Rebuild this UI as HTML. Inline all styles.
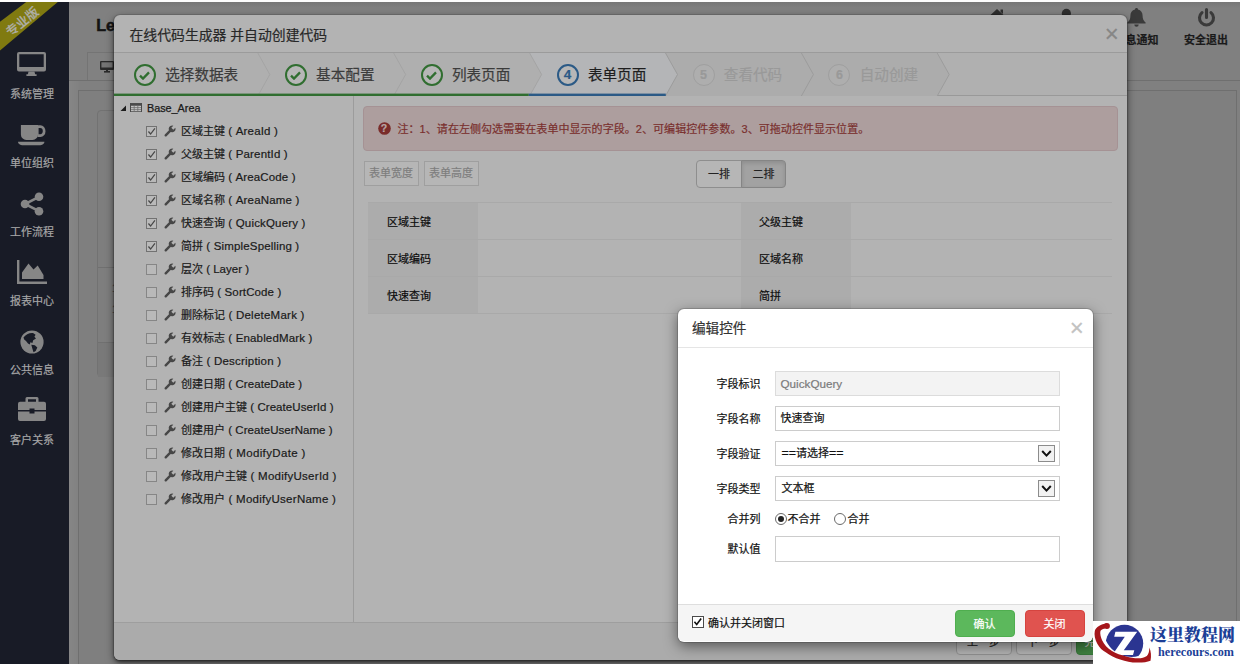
<!DOCTYPE html>
<html lang="zh-CN">
<head>
<meta charset="utf-8">
<title>在线代码生成器</title>
<style>
*{box-sizing:border-box;margin:0;padding:0}
html,body{width:1240px;height:664px;overflow:hidden}
body{position:relative;background:#808080;font-family:"Liberation Sans","Noto Sans CJK SC",sans-serif;font-size:12px;color:#222;line-height:1;-webkit-text-stroke:.2px}
.abs{position:absolute}
svg{display:block}
/* ---------- page behind ---------- */
#side{left:0;top:0;width:69px;height:664px;background:#181b26}
.nav{position:absolute;left:0;width:64px;text-align:center;color:#a6a6a6;font-size:11px;line-height:12px;white-space:nowrap}
.nav svg{position:absolute}
#ribbon{left:-7.500px;top:15.500px;font-weight:500;width:60px;height:13px;transform:rotate(-39deg);transform-origin:50% 50%;color:#aeaea6;font-size:12.500px;line-height:13px;text-align:center;white-space:nowrap}
.tb{position:absolute;top:33.800px;font-size:11px;line-height:12px;color:#1a1a1a;white-space:nowrap;font-weight:bold}
/* ---------- modal 1 ---------- */
#m1{left:114px;top:15px;width:1013px;height:645px;background:#b3b3b3;border-radius:6px;box-shadow:0 3px 9px rgba(0,0,0,.5),0 2px 3px rgba(0,0,0,.4),0 0 0 1px rgba(0,0,0,.1)}
#m1 .hd{left:0;top:0;width:100%;height:38px;border-bottom:1px solid #9b9b9b}
#m1 .ttl{left:15.500px;top:11.500px;font-size:13.850px;line-height:16px;color:#282828;white-space:nowrap}
#m1 .ft{left:0;top:607px;width:100%;height:38px;background:#ababab;border-top:1px solid #9e9e9e;border-radius:0 0 6px 6px}
.step{position:absolute;top:38px;height:43px}
.step .c{position:absolute;top:11px;width:22px;height:22px;border-radius:50%;border:2px solid #306e30;background:#b7b7b7;text-align:center}
.step .t{position:absolute;top:14px;font-size:14.600px;line-height:16px;color:#3b3b3b;white-space:nowrap}
.tr{position:absolute;left:0;height:23px;width:239px;white-space:nowrap;font-size:11px;color:#1a1a1a;}
.tr .cb{position:absolute;left:32.300px;top:6.500px;width:10.700px;height:10.700px;border:1px solid #727272;background:#b9b9b9}
.tr .wr{position:absolute;left:50px;top:5px}
.en{font-size:11.500px}
.fl{font-size:11px;line-height:14px;color:#0c0c0c;white-space:nowrap}
.tr .tx{position:absolute;left:67px;top:4px;line-height:14px}
.fb{top:6px;width:56px;height:26px;border:1px solid #909090;border-radius:4px;background:#b3b3b3;color:#222;font-size:11px;line-height:24px;text-align:center;white-space:nowrap}
/* ---------- modal 2 ---------- */
#m2{left:677.500px;top:309px;width:415px;height:332.500px;background:#fff;border-radius:6px;box-shadow:0 4px 14px rgba(0,0,0,.5),0 0 0 1px rgba(0,0,0,.15)}
#m2 .lb{position:absolute;left:0;width:83px;text-align:right;font-size:11px;line-height:14px;color:#111;white-space:nowrap}
#m2 .in{position:absolute;left:97px;width:285px;height:25px;border:1px solid #ccc;background:#fff;font-size:11px;line-height:23px;padding-left:5px;color:#111;white-space:nowrap}
.btn{position:absolute;top:301px;width:60px;height:27px;border-radius:4px;color:#fff;font-size:11px;line-height:27px;text-align:center}
</style>
</head>
<body>
<!-- PAGE BEHIND -->
<div id="bg" class="abs" style="left:0;top:0;width:1240px;height:664px">
  <div class="abs" style="left:69px;top:0;width:1171px;height:8px;background:linear-gradient(#747474,#808080)"></div>
  <div class="abs" style="left:96.200px;top:15.900px;font-size:16.200px;font-weight:bold;color:#141414;-webkit-text-stroke:.5px #141414;line-height:18px;white-space:nowrap">LeaRun</div>
  <!-- top right icons -->
  <svg class="abs" style="left:989px;top:8px" width="18" height="18" viewBox="0 0 18 18"><path fill="#2e2e2e" d="M8 1L1 7.500V18h14V7.500zM11.500 1.500H14V6l-2.500-2.300z"/></svg>
  <svg class="abs" style="left:1059px;top:8px" width="16" height="18" viewBox="0 0 16 18"><circle cx="7.400" cy="5.400" r="4.600" fill="#2e2e2e"/><path fill="#2e2e2e" d="M0 18c0-5 3-7 7.400-7s7.400 2 7.400 7z"/></svg>
  <svg class="abs" style="left:1127px;top:8px" width="19" height="19" viewBox="0 0 19 19"><path fill="#3a3a3a" d="M9.500 0c.9 0 1.500.6 1.500 1.400 3 .7 4.600 3.200 4.600 6.300 0 3.500 1 5.200 3 6.800v1H.4v-1c2-1.600 3-3.300 3-6.800 0-3.100 1.600-5.600 4.600-6.300C8 .6 8.600 0 9.500 0zM7.300 16.500h4.400a2.200 2.200 0 0 1-4.400 0z"/></svg>
  <div class="tb" style="left:1114.500px">消息通知</div>
  <svg class="abs" style="left:1197px;top:8px" width="19" height="19" viewBox="0 0 19 19"><path fill="none" stroke="#3a3a3a" stroke-width="3.100" stroke-linecap="round" d="M5 4.600a7 7 0 1 0 9 0M9.500 1.600v7.800"/></svg>
  <div class="tb" style="left:1184px">安全退出</div>
  <!-- tab bar -->
  <div class="abs" style="left:69px;top:80px;width:1171px;height:1px;background:#6f6f6f"></div>
  <div class="abs" style="left:87px;top:52px;width:120px;height:28px;border:1px solid #747474;border-bottom:none;background:#818181"></div>
  <svg class="abs" style="left:100px;top:61px" width="14" height="12" viewBox="0 0 14 12"><rect x="0" y="0" width="14" height="9" rx="1" fill="#2a2a2a"/><rect x="1.4" y="1.3" width="11.2" height="5.2" fill="#757575"/><rect x="4" y="10" width="6" height="1.6" fill="#2a2a2a"/><rect x="6" y="9" width="2" height="1.5" fill="#2a2a2a"/></svg>
  <!-- content frame -->
  <div class="abs" style="left:69px;top:81px;width:10px;height:583px;background:linear-gradient(90deg,#868686,#818181)"></div>
  <div class="abs" style="left:78px;top:90px;width:1159px;height:580px;border:1px solid #6f6f6f;background:#7f7f7f"></div>
  <div class="abs" style="left:97px;top:109.500px;width:700px;height:267px;border:1px solid #727272;border-radius:4px;background:#7e7e7e">
    <div class="abs" style="left:0;top:156px;width:100%;height:1px;background:#707070"></div>
    <div class="abs" style="left:0;top:231px;width:100%;height:35px;background:#797979;border-top:1px solid #707070"></div>
    <div class="abs" style="left:14px;top:170px;font-size:11px;line-height:14px;color:#4a4a4a;white-space:nowrap">1</div>
    <div class="abs" style="left:14px;top:191px;font-size:11px;line-height:14px;color:#4a4a4a;white-space:nowrap">1</div>
  </div>
</div>
<!-- SIDEBAR -->
<div id="side" class="abs">
  <svg class="abs" style="left:0;top:0" width="69" height="60" viewBox="0 0 69 60"><polygon points="0,21.7 26.2,2 57.800,2 0,50.600" fill="#807a10"/></svg>
  <div id="ribbon" class="abs">专业版</div>
  <!-- 1 monitor -->
  <svg class="abs" style="left:17px;top:52px" width="29" height="24" viewBox="0 0 29 24"><path fill="#868686" fill-rule="evenodd" d="M2 0h25a2 2 0 0 1 2 2v15.5a2 2 0 0 1-2 2H2a2 2 0 0 1-2-2V2a2 2 0 0 1 2-2zM2.3 2.3v12.7h24.4V2.3z"/><path fill="#868686" d="M11.5 19.5h6l.6 2.7h1.5V24H9.4v-1.8h1.5z"/></svg>
  <div class="nav" style="top:87.7px">系统管理</div>
  <!-- 2 cup -->
  <svg class="abs" style="left:18px;top:125px" width="28" height="21" viewBox="0 0 28 21"><g fill="#868686"><path d="M2.900 0H20v9.500a5.400 5.400 0 0 1-5.400 5.400H8.300a5.400 5.400 0 0 1-5.400-5.400z"/><path fill-rule="evenodd" d="M19.500.3h3a5 5.900 0 0 1 0 11.800h-3zM20.600 3v6.200h1.600a2.600 3.100 0 0 0 0-6.200z"/><path d="M0 16.700h26.400c0 2-2.400 3.600-5 3.600H5c-2.600 0-5-1.600-5-3.600z"/></g></svg>
  <div class="nav" style="top:156.7px">单位组织</div>
  <!-- 3 share -->
  <svg class="abs" style="left:20px;top:192px" width="24" height="24" viewBox="0 0 24 24"><g fill="#868686" stroke="#868686"><path d="M19 4.800L5 12l14 7.200" fill="none" stroke-width="2.600"/><circle cx="19" cy="4.800" r="4.300" stroke="none"/><circle cx="5" cy="12" r="4.300" stroke="none"/><circle cx="19" cy="19.200" r="4.300" stroke="none"/></g></svg>
  <div class="nav" style="top:225.7px">工作流程</div>
  <!-- 4 area chart -->
  <svg class="abs" style="left:17px;top:260px" width="30" height="24" viewBox="0 0 30 24"><g fill="#868686"><path d="M0 0h2.400v21.400H30V24H0z"/><path d="M5 19V12.500L11.500 3.500l5 6 4.200-4L26.500 15v4z"/></g></svg>
  <div class="nav" style="top:294.7px">报表中心</div>
  <!-- 5 globe -->
  <svg class="abs" style="left:20px;top:330px" width="24" height="24" viewBox="0 0 24 24"><circle cx="12" cy="12" r="11.600" fill="#868686"/><path fill="#181b26" d="M3.500 7.500C5.500 4.500 9.500 2.600 13 3l2.600 1.800-1.200 2 1.600 1.600-2.800 1.800-.8 2.800-2-.8-.6 2.400-1.800-1.200L6 11 4.200 9.600z"/><path fill="#181b26" d="M11.300 14.800l3.600.4 2.400 2.200-1.600 3.600-2.200 1.200-1-3.200z"/></svg>
  <div class="nav" style="top:363.7px">公共信息</div>
  <!-- 6 briefcase -->
  <svg class="abs" style="left:18px;top:397px" width="28" height="24" viewBox="0 0 28 24"><g fill="#868686"><path fill-rule="evenodd" d="M9 0h10a1.500 1.500 0 0 1 1.500 1.500V5H18V2.300H10V5H7.500V1.500A1.500 1.500 0 0 1 9 0z"/><path d="M2 4.800h24a2 2 0 0 1 2 2V13H16.500v-1.500h-5V13H0V6.800a2 2 0 0 1 2-2z"/><path d="M0 14.600h11.500v2h5v-2H28V22a2 2 0 0 1-2 2H2a2 2 0 0 1-2-2z"/></g></svg>
  <div class="nav" style="top:433.7px">客户关系</div>
</div>
<!-- MODAL 1 -->
<div id="m1" class="abs">
  <div class="hd abs"></div>
  <div class="ttl abs">在线代码生成器 并自动创建代码</div>
  <div id="x1" class="abs" style="left:989.800px;top:6.500px;width:16px;font-size:24px;line-height:24px;font-weight:normal;color:#868686;text-align:center">×</div>
  <div class="abs" style="left:0;top:38px;width:1013px;height:43px;background:#b0b0b0;border-bottom:1px solid #999"></div>
  <svg class="abs" style="left:0;top:38px" width="1013" height="43" viewBox="0 0 1013 43">
    <polygon points="0.0,0.0 143.8,0.0 155.8,21.5 143.8,43.0 0.0,43.0" fill="#afafaf"/>
    <polygon points="143.8,0.0 279.6,0.0 291.6,21.5 279.6,43.0 143.8,43.0 155.8,21.5" fill="#afafaf"/>
    <polygon points="279.6,0.0 415.6,0.0 427.6,21.5 415.6,43.0 279.6,43.0 291.6,21.5" fill="#afafaf"/>
    <polygon points="415.6,0.0 551.5,0.0 563.5,21.5 551.5,43.0 415.6,43.0 427.6,21.5" fill="#b4b5b7"/>
    <polygon points="551.5,0.0 687.4,0.0 699.4,21.5 687.4,43.0 551.5,43.0 563.5,21.5" fill="#acacac"/>
    <polygon points="687.4,0.0 823.2,0.0 835.2,21.5 823.2,43.0 687.4,43.0 699.4,21.5" fill="#acacac"/>
    <g fill="none" stroke="#a4a4a4" stroke-width="1"><polyline points="143.8,0 155.8,21.5 143.8,43"/><polyline points="279.6,0 291.6,21.5 279.6,43"/><polyline points="415.6,0 427.6,21.5 415.6,43"/></g>
    <g fill="none" stroke="#9c9c9c" stroke-width="1"><polyline points="551.5,0 563.5,21.5 551.5,43"/><polyline points="687.4,0 699.4,21.5 687.4,43"/><polyline points="823.2,0 835.2,21.5 823.2,43"/></g>
    <rect x="0" y="40.600" width="414.800" height="2.400" fill="#306e30"/>
    <rect x="414.800" y="40.600" width="137" height="2.400" fill="#2b5a86"/>
  </svg>
  <div class="step" style="left:0.0px;width:135.9px"><div class="c" style="left:19.5px"><svg width="11" height="9" viewBox="0 0 11 9" style="position:absolute;left:3.500px;top:5px"><path d="M1 4.600l3 3L10 1.400" fill="none" stroke="#306e30" stroke-width="2.300"/></svg></div><div class="t" style="left:51.2px">选择数据表</div></div>
  <div class="step" style="left:143.8px;width:135.9px"><div class="c" style="left:27.0px"><svg width="11" height="9" viewBox="0 0 11 9" style="position:absolute;left:3.500px;top:5px"><path d="M1 4.600l3 3L10 1.400" fill="none" stroke="#306e30" stroke-width="2.300"/></svg></div><div class="t" style="left:58.3px">基本配置</div></div>
  <div class="step" style="left:279.6px;width:135.9px"><div class="c" style="left:27.0px"><svg width="11" height="9" viewBox="0 0 11 9" style="position:absolute;left:3.500px;top:5px"><path d="M1 4.600l3 3L10 1.400" fill="none" stroke="#306e30" stroke-width="2.300"/></svg></div><div class="t" style="left:58.3px">列表页面</div></div>
  <div class="step" style="left:415.6px;width:135.9px"><div class="c" style="left:27.0px;border-color:#2b5a86;color:#2b5a86;font-size:13.500px;font-weight:bold;line-height:18px">4</div><div class="t" style="left:58.3px;color:#1e1e1e">表单页面</div></div>
  <div class="step" style="left:551.5px;width:135.9px"><div class="c" style="left:27.0px;border:1px solid #9f9f9f;background:#aeaeae;color:#999;font-size:12.500px;font-weight:bold;line-height:20px">5</div><div class="t" style="left:58.3px;color:#999">查看代码</div></div>
  <div class="step" style="left:687.4px;width:135.9px"><div class="c" style="left:27.0px;border:1px solid #9f9f9f;background:#aeaeae;color:#999;font-size:12.500px;font-weight:bold;line-height:20px">6</div><div class="t" style="left:58.3px;color:#999">自动创建</div></div>
  <!-- tree -->
  <div class="abs" style="left:0;top:81px;width:240px;height:526px;border-right:1px solid #9c9c9c"></div>
  <svg class="abs" style="left:6px;top:90px" width="7" height="7" viewBox="0 0 7 7"><path d="M6 .5V6H.5z" fill="#1c1c1c"/></svg>
  <svg class="abs" style="left:15.800px;top:88px" width="12" height="9.200" viewBox="0 0 12 10" preserveAspectRatio="none"><rect x=".5" y=".5" width="11" height="9" fill="#c4c4c4" stroke="#4a4a4a"/><rect x=".5" y=".5" width="11" height="2.500" fill="#4a4a4a"/><path d="M1 5h10M1 7.200h10M4.200 3v6.500M7.800 3v6.500" stroke="#6a6a6a" stroke-width=".8" fill="none"/></svg>
  <div class="abs" style="left:33px;top:86px;font-size:10.800px;line-height:14px;color:#1a1a1a;-webkit-text-stroke:.25px #1a1a1a;white-space:nowrap">Base_Area</div>
  <div class="tr" style="top:104.5px"><span class="cb"><svg width="9" height="9" viewBox="0 0 10 10" style="position:absolute;left:0;top:0"><path d="M1.600 5l2.400 2.800L8.800 1.600" fill="none" stroke="#484848" stroke-width="1.400"/></svg></span><svg class="wr" width="12" height="12" viewBox="0 0 12 12"><path d="M1.700 10.300L6.800 5.200" stroke="#474747" stroke-width="2.400" stroke-linecap="round" fill="none"/><path d="M11.300 2.700L9.300 4.700 7.300 2.700 9.300.7A3.400 3.400 0 1 0 11.300 2.700z" fill="#474747"/></svg><span class="tx">区域主键<span class="en" style="letter-spacing:0.17px"> ( AreaId )</span></span></div>
  <div class="tr" style="top:127.5px"><span class="cb"><svg width="9" height="9" viewBox="0 0 10 10" style="position:absolute;left:0;top:0"><path d="M1.600 5l2.400 2.800L8.800 1.600" fill="none" stroke="#484848" stroke-width="1.400"/></svg></span><svg class="wr" width="12" height="12" viewBox="0 0 12 12"><path d="M1.700 10.300L6.800 5.200" stroke="#474747" stroke-width="2.400" stroke-linecap="round" fill="none"/><path d="M11.300 2.700L9.300 4.700 7.300 2.700 9.300.7A3.400 3.400 0 1 0 11.300 2.700z" fill="#474747"/></svg><span class="tx">父级主键<span class="en" style="letter-spacing:0.16px"> ( ParentId )</span></span></div>
  <div class="tr" style="top:150.5px"><span class="cb"><svg width="9" height="9" viewBox="0 0 10 10" style="position:absolute;left:0;top:0"><path d="M1.600 5l2.400 2.800L8.800 1.600" fill="none" stroke="#484848" stroke-width="1.400"/></svg></span><svg class="wr" width="12" height="12" viewBox="0 0 12 12"><path d="M1.700 10.300L6.800 5.200" stroke="#474747" stroke-width="2.400" stroke-linecap="round" fill="none"/><path d="M11.300 2.700L9.300 4.700 7.300 2.700 9.300.7A3.400 3.400 0 1 0 11.300 2.700z" fill="#474747"/></svg><span class="tx">区域编码<span class="en" style="letter-spacing:0.12px"> ( AreaCode )</span></span></div>
  <div class="tr" style="top:173.5px"><span class="cb"><svg width="9" height="9" viewBox="0 0 10 10" style="position:absolute;left:0;top:0"><path d="M1.600 5l2.400 2.800L8.800 1.600" fill="none" stroke="#484848" stroke-width="1.400"/></svg></span><svg class="wr" width="12" height="12" viewBox="0 0 12 12"><path d="M1.700 10.300L6.800 5.200" stroke="#474747" stroke-width="2.400" stroke-linecap="round" fill="none"/><path d="M11.300 2.700L9.300 4.700 7.300 2.700 9.300.7A3.400 3.400 0 1 0 11.300 2.700z" fill="#474747"/></svg><span class="tx">区域名称<span class="en" style="letter-spacing:0.17px"> ( AreaName )</span></span></div>
  <div class="tr" style="top:196.5px"><span class="cb"><svg width="9" height="9" viewBox="0 0 10 10" style="position:absolute;left:0;top:0"><path d="M1.600 5l2.400 2.800L8.800 1.600" fill="none" stroke="#484848" stroke-width="1.400"/></svg></span><svg class="wr" width="12" height="12" viewBox="0 0 12 12"><path d="M1.700 10.300L6.800 5.200" stroke="#474747" stroke-width="2.400" stroke-linecap="round" fill="none"/><path d="M11.300 2.700L9.300 4.700 7.300 2.700 9.300.7A3.400 3.400 0 1 0 11.300 2.700z" fill="#474747"/></svg><span class="tx">快速查询<span class="en" style="letter-spacing:0.17px"> ( QuickQuery )</span></span></div>
  <div class="tr" style="top:219.5px"><span class="cb"><svg width="9" height="9" viewBox="0 0 10 10" style="position:absolute;left:0;top:0"><path d="M1.600 5l2.400 2.800L8.800 1.600" fill="none" stroke="#484848" stroke-width="1.400"/></svg></span><svg class="wr" width="12" height="12" viewBox="0 0 12 12"><path d="M1.700 10.300L6.800 5.200" stroke="#474747" stroke-width="2.400" stroke-linecap="round" fill="none"/><path d="M11.300 2.700L9.300 4.700 7.300 2.700 9.300.7A3.400 3.400 0 1 0 11.300 2.700z" fill="#474747"/></svg><span class="tx">简拼<span class="en" style="letter-spacing:0.16px"> ( SimpleSpelling )</span></span></div>
  <div class="tr" style="top:242.5px"><span class="cb" style="border-color:#868686"></span><svg class="wr" width="12" height="12" viewBox="0 0 12 12"><path d="M1.700 10.300L6.800 5.200" stroke="#474747" stroke-width="2.400" stroke-linecap="round" fill="none"/><path d="M11.300 2.700L9.300 4.700 7.300 2.700 9.300.7A3.400 3.400 0 1 0 11.300 2.700z" fill="#474747"/></svg><span class="tx">层次<span class="en"> ( Layer )</span></span></div>
  <div class="tr" style="top:265.5px"><span class="cb" style="border-color:#868686"></span><svg class="wr" width="12" height="12" viewBox="0 0 12 12"><path d="M1.700 10.300L6.800 5.200" stroke="#474747" stroke-width="2.400" stroke-linecap="round" fill="none"/><path d="M11.300 2.700L9.300 4.700 7.300 2.700 9.300.7A3.400 3.400 0 1 0 11.300 2.700z" fill="#474747"/></svg><span class="tx">排序码<span class="en" style="letter-spacing:0.12px"> ( SortCode )</span></span></div>
  <div class="tr" style="top:288.5px"><span class="cb" style="border-color:#868686"></span><svg class="wr" width="12" height="12" viewBox="0 0 12 12"><path d="M1.700 10.300L6.800 5.200" stroke="#474747" stroke-width="2.400" stroke-linecap="round" fill="none"/><path d="M11.300 2.700L9.300 4.700 7.300 2.700 9.300.7A3.400 3.400 0 1 0 11.300 2.700z" fill="#474747"/></svg><span class="tx">删除标记<span class="en" style="letter-spacing:0.24px"> ( DeleteMark )</span></span></div>
  <div class="tr" style="top:311.5px"><span class="cb" style="border-color:#868686"></span><svg class="wr" width="12" height="12" viewBox="0 0 12 12"><path d="M1.700 10.300L6.800 5.200" stroke="#474747" stroke-width="2.400" stroke-linecap="round" fill="none"/><path d="M11.300 2.700L9.300 4.700 7.300 2.700 9.300.7A3.400 3.400 0 1 0 11.300 2.700z" fill="#474747"/></svg><span class="tx">有效标志<span class="en" style="letter-spacing:0.15px"> ( EnabledMark )</span></span></div>
  <div class="tr" style="top:334.5px"><span class="cb" style="border-color:#868686"></span><svg class="wr" width="12" height="12" viewBox="0 0 12 12"><path d="M1.700 10.300L6.800 5.200" stroke="#474747" stroke-width="2.400" stroke-linecap="round" fill="none"/><path d="M11.300 2.700L9.300 4.700 7.300 2.700 9.300.7A3.400 3.400 0 1 0 11.300 2.700z" fill="#474747"/></svg><span class="tx">备注<span class="en" style="letter-spacing:0.22px"> ( Description )</span></span></div>
  <div class="tr" style="top:357.5px"><span class="cb" style="border-color:#868686"></span><svg class="wr" width="12" height="12" viewBox="0 0 12 12"><path d="M1.700 10.300L6.800 5.200" stroke="#474747" stroke-width="2.400" stroke-linecap="round" fill="none"/><path d="M11.300 2.700L9.300 4.700 7.300 2.700 9.300.7A3.400 3.400 0 1 0 11.300 2.700z" fill="#474747"/></svg><span class="tx">创建日期<span class="en" style="letter-spacing:0.07px"> ( CreateDate )</span></span></div>
  <div class="tr" style="top:380.5px"><span class="cb" style="border-color:#868686"></span><svg class="wr" width="12" height="12" viewBox="0 0 12 12"><path d="M1.700 10.300L6.800 5.200" stroke="#474747" stroke-width="2.400" stroke-linecap="round" fill="none"/><path d="M11.300 2.700L9.300 4.700 7.300 2.700 9.300.7A3.400 3.400 0 1 0 11.300 2.700z" fill="#474747"/></svg><span class="tx">创建用户主键<span class="en" style="letter-spacing:0.06px"> ( CreateUserId )</span></span></div>
  <div class="tr" style="top:403.5px"><span class="cb" style="border-color:#868686"></span><svg class="wr" width="12" height="12" viewBox="0 0 12 12"><path d="M1.700 10.300L6.800 5.200" stroke="#474747" stroke-width="2.400" stroke-linecap="round" fill="none"/><path d="M11.300 2.700L9.300 4.700 7.300 2.700 9.300.7A3.400 3.400 0 1 0 11.300 2.700z" fill="#474747"/></svg><span class="tx">创建用户<span class="en" style="letter-spacing:0.05px"> ( CreateUserName )</span></span></div>
  <div class="tr" style="top:426.5px"><span class="cb" style="border-color:#868686"></span><svg class="wr" width="12" height="12" viewBox="0 0 12 12"><path d="M1.700 10.300L6.800 5.200" stroke="#474747" stroke-width="2.400" stroke-linecap="round" fill="none"/><path d="M11.300 2.700L9.300 4.700 7.300 2.700 9.300.7A3.400 3.400 0 1 0 11.300 2.700z" fill="#474747"/></svg><span class="tx">修改日期<span class="en" style="letter-spacing:0.35px"> ( ModifyDate )</span></span></div>
  <div class="tr" style="top:449.5px"><span class="cb" style="border-color:#868686"></span><svg class="wr" width="12" height="12" viewBox="0 0 12 12"><path d="M1.700 10.300L6.800 5.200" stroke="#474747" stroke-width="2.400" stroke-linecap="round" fill="none"/><path d="M11.300 2.700L9.300 4.700 7.300 2.700 9.300.7A3.400 3.400 0 1 0 11.300 2.700z" fill="#474747"/></svg><span class="tx">修改用户主键<span class="en" style="letter-spacing:0.27px"> ( ModifyUserId )</span></span></div>
  <div class="tr" style="top:472.5px"><span class="cb" style="border-color:#868686"></span><svg class="wr" width="12" height="12" viewBox="0 0 12 12"><path d="M1.700 10.300L6.800 5.200" stroke="#474747" stroke-width="2.400" stroke-linecap="round" fill="none"/><path d="M11.300 2.700L9.300 4.700 7.300 2.700 9.300.7A3.400 3.400 0 1 0 11.300 2.700z" fill="#474747"/></svg><span class="tx">修改用户<span class="en" style="letter-spacing:0.27px"> ( ModifyUserName )</span></span></div>
  <!-- right panel -->
  <div class="abs" style="left:249px;top:91px;width:755px;height:45px;background:#ad9e9e;border:1px solid #a59294;border-radius:4px"></div>
  <svg class="abs" style="left:263.500px;top:107px" width="13" height="13" viewBox="0 0 13 13"><circle cx="6.500" cy="6.500" r="6.300" fill="#7a2c2a"/></svg>
  <div class="abs" style="left:263.500px;top:107px;width:13px;height:13px;color:#b7a5a5;font-weight:bold;font-size:10.500px;line-height:13.500px;text-align:center">?</div>
  <div class="abs" style="left:283.500px;top:106px;font-size:11px;line-height:15px;color:#7a302e;white-space:nowrap;letter-spacing:.055px;margin-top:.5px">注：1、请在左侧勾选需要在表单中显示的字段。2、可编辑控件参数。3、可拖动控件显示位置。</div>
  <div class="abs" style="left:249.600px;top:146px;width:55px;height:25px;border:1px solid #9f9f9f;background:#b6b6b6;color:#7e7e7e;font-size:11px;line-height:23px;text-align:center;white-space:nowrap">表单宽度</div>
  <div class="abs" style="left:309.600px;top:146px;width:55px;height:25px;border:1px solid #9f9f9f;background:#b6b6b6;color:#7e7e7e;font-size:11px;line-height:23px;text-align:center;white-space:nowrap">表单高度</div>
  <div class="abs" style="left:582px;top:145px;width:46px;height:28px;border:1px solid #8e8e8e;border-radius:4px 0 0 4px;background:#b6b6b6;color:#222;font-size:11px;line-height:26px;text-align:center">一排</div>
  <div class="abs" style="left:627px;top:145px;width:45px;height:28px;border:1px solid #858585;border-radius:0 4px 4px 0;background:#a2a2a2;box-shadow:inset 0 2px 4px rgba(0,0,0,.13);color:#222;font-size:11px;line-height:26px;text-align:center">二排</div>
  <!-- form table -->
  <div class="abs" style="left:254px;top:187px;width:744px;height:112px;border-top:1px solid #a9a9a9">
    <div class="abs" style="left:0;top:0;width:110px;height:111px;background:#acacac"></div>
    <div class="abs" style="left:373px;top:0;width:110px;height:111px;background:#acacac"></div>
    <div class="abs" style="left:0;top:36px;width:744px;height:1px;background:#a9a9a9"></div>
    <div class="abs" style="left:0;top:73px;width:744px;height:1px;background:#a9a9a9"></div>
    <div class="abs" style="left:0;top:110px;width:744px;height:1px;background:#a9a9a9"></div>
    <div class="abs fl" style="left:19px;top:12px">区域主键</div><div class="abs fl" style="left:391px;top:12px">父级主键</div>
    <div class="abs fl" style="left:19px;top:49px">区域编码</div><div class="abs fl" style="left:391px;top:49px">区域名称</div>
    <div class="abs fl" style="left:19px;top:86px">快速查询</div><div class="abs fl" style="left:391px;top:86px">简拼</div>
  </div>
  <div class="ft abs">
    <div class="abs fb" style="left:841.500px">上一步</div>
    <div class="abs fb" style="left:901.500px">下一步</div>
    <div class="abs fb" style="left:961.500px;width:40px;background:#3f8140;border-color:#37763a;color:#b5b5b5">完成</div>
  </div>
</div>
<!-- MODAL 2 -->
<div id="m2" class="abs">
  <div class="abs" style="left:14.500px;top:12px;font-size:13.600px;line-height:16px;color:#333;white-space:nowrap">编辑控件</div>
  <div id="x2" class="abs" style="left:391.200px;top:6.500px;width:16px;font-size:24px;line-height:24px;font-weight:normal;color:#c2c2c2;text-align:center">×</div>
  <div class="abs" style="left:0;top:38px;width:415px;height:1px;background:#e5e5e5"></div>
  <div class="lb" style="top:68px">字段标识</div>
  <div class="in" style="top:62px;background:#f3f3f3;color:#7b7b7b;border-color:#dcdcdc;font-size:11.700px">QuickQuery</div>
  <div class="lb" style="top:103px">字段名称</div>
  <div class="in" style="top:97px">快速查询</div>
  <div class="lb" style="top:138px">字段验证</div>
  <div class="in" style="top:132px;padding-left:6px"><span style="font-size:12.400px">==</span>请选择<span style="font-size:12.400px">==</span></div>
  <svg class="abs" style="left:360px;top:136px" width="17" height="17" viewBox="0 0 17 17"><rect x=".5" y=".5" width="16" height="16" fill="#f2f2f2" stroke="#8c8c8c"/><path d="M4.200 6l4.300 4.600L12.800 6" fill="none" stroke="#111" stroke-width="2"/></svg>
  <div class="lb" style="top:173px">字段类型</div>
  <div class="in" style="top:167px;padding-left:6px">文本框</div>
  <svg class="abs" style="left:360px;top:171px" width="17" height="17" viewBox="0 0 17 17"><rect x=".5" y=".5" width="16" height="16" fill="#f2f2f2" stroke="#8c8c8c"/><path d="M4.200 6l4.300 4.600L12.800 6" fill="none" stroke="#111" stroke-width="2"/></svg>
  <div class="lb" style="top:203px">合并列</div>
  <div class="abs" style="left:97px;top:204px;width:12px;height:12px;border:1px solid #6a6a6a;border-radius:50%;background:#fff"><div class="abs" style="left:2px;top:2px;width:6px;height:6px;border-radius:50%;background:#222"></div></div>
  <div class="abs" style="left:110px;top:203px;font-size:11px;line-height:14px;color:#111;white-space:nowrap">不合并</div>
  <div class="abs" style="left:156px;top:204px;width:12px;height:12px;border:1px solid #6a6a6a;border-radius:50%;background:#fff"></div>
  <div class="abs" style="left:170px;top:203px;font-size:11px;line-height:14px;color:#111;white-space:nowrap">合并</div>
  <div class="lb" style="top:233px">默认值</div>
  <div class="in" style="top:227px;height:26px"></div>
  <div class="abs" style="left:0;top:295px;width:415px;height:37px;background:#f5f5f5;border-top:1px solid #dedede;border-radius:0 0 6px 6px"></div>
  <div class="abs" style="left:14.500px;top:307.300px;width:11.500px;height:11.500px;border:1px solid #4a4a4a;background:#fff"><svg width="9.500" height="9.500" viewBox="0 0 10 10"><path d="M1.500 5l2.400 2.800L8.600 1.600" fill="none" stroke="#111" stroke-width="1.700"/></svg></div>
  <div class="abs" style="left:30.500px;top:306.500px;font-size:11px;line-height:14px;color:#111;white-space:nowrap">确认并关闭窗口</div>
  <div class="btn" style="left:277px;background:#5cb85c;border:1px solid #4fae4f">确认</div>
  <div class="btn" style="left:347px;background:#e0534f;border:1px solid #d5443f">关闭</div>
</div>
<!-- WATERMARK -->
<div id="wm" class="abs" style="left:1093px;top:621px;width:147px;height:43px;background:#fff;overflow:hidden;-webkit-text-stroke:0">
  <svg class="abs" style="left:0;top:0" width="62" height="43" viewBox="0 0 62 43">
    <circle cx="31.500" cy="22.500" r="18.700" fill="#2b3591"/>
    <path d="M22.400 10.700H44.200L30.800 29.300H41.300L40 34H19.300L31.800 15.700H21.200z" fill="#fff"/>
    <path d="M11.500 7.100C10 11 10.500 15 12.700 19.200 15 24 18 27.500 21.200 30.100 25 33 29 34.800 33.300 35.500 38 36.300 42 36 45.400 35L46 44 0 44 0 5z" fill="#fff"/>
    <path d="M13.900 2.200C8 3 2.800 6 1.800 10 1 14 2 18.500 4.300 22.800 6.500 27 9.500 29.500 12.700 31.300 17 34.500 22 37 27.200 38.500 33 40.500 39 41.800 45.400 41.600 50 41.500 54.500 41 57.500 39.700 58.500 35 58 30 56.300 26.400 56.500 30 55.500 33 53.800 34.900 51.500 36.500 48.500 37.300 45.400 37.300 41 37.300 37 36.600 33.300 35.500 28 34 23 32.500 19 30 14.500 27 11 23.500 9.100 19.200 7.800 16 7 13 7.300 10.700 7.600 9 9 7.800 12 7.400z" fill="#a5161b"/>
    <circle cx="13.900" cy="4.900" r="3" fill="#a5161b"/>
  </svg>
  <div class="abs" style="left:57px;top:5px;font-family:'Liberation Serif','Noto Serif CJK SC',serif;font-weight:900;font-size:17px;line-height:20px;color:#1c3f97;white-space:nowrap;letter-spacing:0" id="wm1">这里教程网</div>
  <div class="abs" style="left:65px;top:23px;font-family:'Liberation Serif',serif;font-weight:bold;font-size:12.200px;line-height:16px;color:#1c3f97;white-space:nowrap;letter-spacing:0" id="wm2">herecours.com</div>
</div>
<div class="abs" style="left:0;top:0;width:1240px;height:2px;background:#fdfdfd"></div>
</body>
</html>
